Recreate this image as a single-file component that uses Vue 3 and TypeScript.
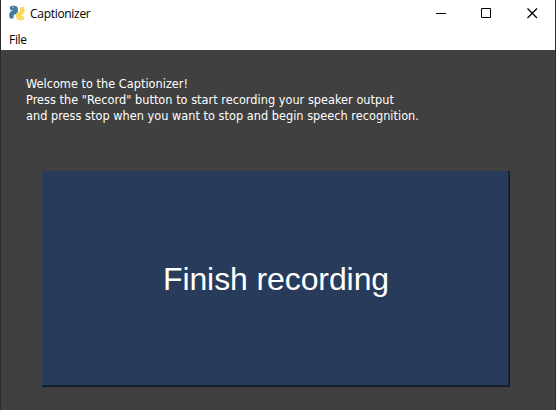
<script setup lang="ts">
const title = 'Captionizer'
const menus: string[] = ['File']
const message: string[] = [
  'Welcome to the Captionizer!',
  'Press the "Record" button to start recording your speaker output',
  'and press stop when you want to stop and begin speech recognition.',
]
</script>

<template>
  <div class="window">
    <header class="titlebar">
      <svg class="logo" viewBox="0 0 16 16" aria-hidden="true">
        <path class="snake blue" d="M3 3H5.200Q6.700 3 6.700 4.800V5.400Q6.700 7.100 5 7.400Q2.500 7.900 2.500 9.800V11.500" />
        <path class="snake yellow" d="M13.200 4V5.800Q13.200 7.800 11 8.300Q9.300 8.800 9.300 10.500V11.300Q9.300 13 10.900 13H12.800" />
        <circle cx="4" cy="2.500" r=".6" fill="#fff" />
        <circle cx="12" cy="13.500" r=".6" fill="#fff" />
      </svg>
      <span class="title">{{ title }}</span>
      <div class="controls">
        <svg viewBox="0 0 46 26"><path d="M16 13.500h10" /></svg>
        <svg viewBox="0 0 46 26"><path d="M15.500 8.500h9v9h-9z" /></svg>
        <svg viewBox="0 0 46 26"><path class="cross" d="M15.500 8.500l9.500 9.500M25 8.500l-9.500 9.500" /></svg>
      </div>
    </header>
    <nav class="menubar">
      <span v-for="menu in menus" :key="menu">{{ menu }}</span>
    </nav>
    <main class="content">
      <div class="message">
        <p v-for="line in message" :key="line">{{ line }}</p>
      </div>
      <button class="record" type="button"><span>Finish recording</span></button>
    </main>
  </div>
</template>

<style>
body {
  margin: 0;
  background: #404040;
}
</style>

<style scoped>
.window {
  box-sizing: border-box;
  width: 556px;
  height: 410px;
  overflow: hidden;
  display: flex;
  flex-direction: column;
  border-left: 1px solid #2b2b2b;
  border-right: 1px solid #2b2b2b;
  background: #404040;
}
.titlebar {
  height: 28px;
  flex: none;
  display: flex;
  align-items: center;
  box-sizing: border-box;
  padding: 0 0 2px 8px;
  background: #fff;
}
.logo {
  width: 16px;
  height: 16px;
}
.snake {
  fill: none;
  stroke-width: 4.500px;
  stroke-linecap: round;
}
.blue {
  stroke: #427ba6;
}
.yellow {
  stroke: #fcd95a;
}
.title {
  margin-left: 5px;
  padding-top: 2px;
  font: 12px/16px "Open Sans", "Noto Sans", sans-serif;
  letter-spacing: -0.3px;
  color: #000;
}
.controls {
  display: flex;
  margin: 0 -3px 0 auto;
}
.controls svg {
  width: 46px;
  height: 26px;
  fill: none;
  stroke: #000;
  stroke-width: 1;
}
.controls .cross {
  stroke-width: 1.300;
}
.menubar {
  height: 22px;
  flex: none;
  padding-left: 8px;
  background: #fff;
  color: #000;
  font: 12px/24px "Open Sans", "Noto Sans", sans-serif;
  letter-spacing: -0.3px;
}
.content {
  flex: 1;
  padding: 26px 0 0 25px;
}
.message {
  color: #fff;
  font: 12.600px/16px "DejaVu Sans Condensed", "DejaVu Sans", sans-serif;
  font-stretch: condensed;
  letter-spacing: 0.020px;
}
.message p {
  margin: 0;
  white-space: pre;
}
.record {
  display: flex;
  align-items: center;
  justify-content: center;
  box-sizing: border-box;
  width: 468px;
  height: 216px;
  margin: 47px 0 0 16px;
  padding: 1px 1px 1px 2px;
  border: 0 solid #101822;
  border-right-width: 1px;
  border-bottom-width: 1px;
  border-radius: 0;
  background: #283b5b;
  box-shadow: inset -1px -1px 0 #1a2740;
  color: #fff;
  font: 32px/40px "Liberation Sans", Arial, sans-serif;
  letter-spacing: -0.1px;
}
</style>
